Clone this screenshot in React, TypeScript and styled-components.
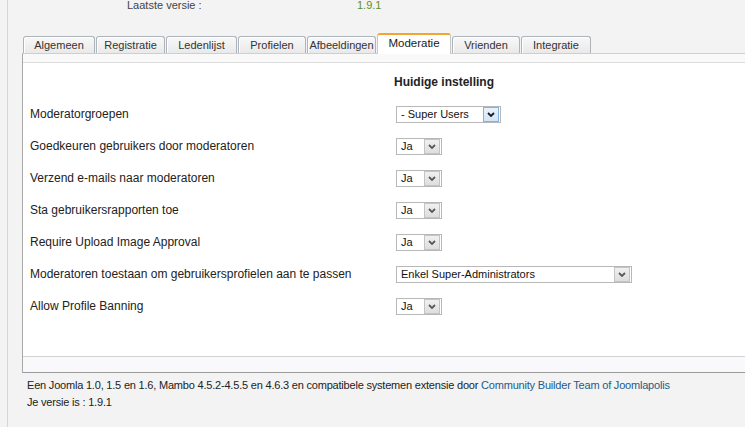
import React from "react";
import styled, { createGlobalStyle } from "styled-components";

const Global = createGlobalStyle`
  html, body { margin: 0; padding: 0; background: #f3f3f3; overflow: hidden; }
  body { font-family: "Liberation Sans", Arial, sans-serif; color: #222; }
`;

const Page = styled.div`
  margin-left: 7px;
  border-left: 1px solid #d6d6d6;
  height: 427px;
  overflow: hidden;
`;

const Header = styled.div`
  display: flex;
  height: 33px;
  font-size: 11px;
  line-height: 10px;
  color: #444;
`;

const HeaderLabel = styled.span`
  margin-left: 119px;
  width: 230px;
`;

const HeaderValue = styled.span`
  color: #5f8f2a;
`;

const TabBar = styled.div`
  display: flex;
  align-items: flex-end;
  height: 20px;
  padding-left: 15px;
  position: relative;
  z-index: 1;
`;

const Tab = styled.div<{ $w: number; $active?: boolean }>`
  box-sizing: border-box;
  width: ${(p) => p.$w}px;
  margin-right: 1px;
  font-size: 11px;
  white-space: nowrap;
  text-align: center;
  color: #333;
  border: 1px solid ${(p) => (p.$active ? "#c9c9c9" : "#aeb4bb")};
  border-bottom: none;
  border-radius: 3px 3px 0 0;
  ${(p) =>
    p.$active
      ? `
    height: 21px;
    margin-bottom: -1px;
    background: #fff;
    border-top: 2px solid #f3a531;
    line-height: 16px;
    font-size: 11.5px;
    color: #1a1a1a;
  `
      : `
    height: 17px;
    line-height: 17px;
    background: linear-gradient(#f8f8f8, #e9e9e9);
    box-shadow: inset 1px 1px 0 #fff;
  `}
`;

const Panel = styled.div`
  margin-left: 14px;
  margin-right: -40px;
  border: 1px solid #a9a9a9;
  border-top-color: #cfcfcf;
  border-bottom-color: #9c9c9c;
  background: #fff;
`;

const PanelTop = styled.div`
  height: 8px;
  background: #f9f9fa;
  border-bottom: 1px solid #dcdcdc;
`;

const PanelBody = styled.div`
  display: grid;
  grid-template-columns: 366px 1fr;
  grid-auto-rows: 32px;
  grid-template-rows: 33px;
  align-items: center;
  padding: 2px 0 34px 7px;
  font-size: 12px;
  color: #222;
`;

const ColHead = styled.div`
  grid-column: 2;
  margin-left: -2px;
  font-weight: bold;
  color: #222;
`;

const Label = styled.div`
  white-space: nowrap;
`;

const PanelBottom = styled.div`
  height: 15px;
  background: #f9f9fb;
  border-top: 1px solid #d2d2d2;
`;

const Footer = styled.div`
  padding: 4px 0 0 19px;
  font-size: 11px;
  letter-spacing: -0.2px;
  line-height: 17px;
  color: #222;
`;

const Link = styled.a`
  color: #1f5a8b;
  text-decoration: none;
`;

const SelectBox = styled.div<{ $w: number }>`
  box-sizing: border-box;
  width: ${(p) => p.$w}px;
  height: 17px;
  border: 1px solid #b8b8b8;
  background: #fff;
  display: flex;
  align-items: center;
  padding: 1px;
  font-size: 11px;
  color: #111;
`;

const SelectText = styled.span`
  flex: 1;
  padding-left: 3px;
  white-space: nowrap;
  overflow: hidden;
`;

const SelectButton = styled.span<{ $focus?: boolean }>`
  box-sizing: border-box;
  width: 16px;
  height: 15px;
  display: flex;
  align-items: center;
  justify-content: center;
  border: 1px solid ${(p) => (p.$focus ? "#7fb2e5" : "#c4c4c4")};
  background: ${(p) =>
    p.$focus ? "linear-gradient(#e8f2fc, #d2e5f8)" : "linear-gradient(#f0f0f0, #dedede)"};
  color: ${(p) => (p.$focus ? "#1b1b1b" : "#5a5a5a")};
`;

const Chevron = () => (
  <svg width="8" height="5" viewBox="0 0 8 5">
    <path d="M1 1 L4 4 L7 1" fill="none" stroke="currentColor" strokeWidth="1.8" />
  </svg>
);

const Select = ({ value, w, focus }: { value: string; w: number; focus?: boolean }) => (
  <SelectBox $w={w}>
    <SelectText>{value}</SelectText>
    <SelectButton $focus={focus}>
      <Chevron />
    </SelectButton>
  </SelectBox>
);

const tabs = [
  { label: "Algemeen", w: 72 },
  { label: "Registratie", w: 69 },
  { label: "Ledenlijst", w: 71 },
  { label: "Profielen", w: 68 },
  { label: "Afbeeldingen", w: 69 },
  { label: "Moderatie", w: 74, active: true },
  { label: "Vrienden", w: 68 },
  { label: "Integratie", w: 70 },
];

const rows = [
  { label: "Moderatorgroepen", value: "- Super Users", w: 105, focus: true },
  { label: "Goedkeuren gebruikers door moderatoren", value: "Ja", w: 46 },
  { label: "Verzend e-mails naar moderatoren", value: "Ja", w: 46 },
  { label: "Sta gebruikersrapporten toe", value: "Ja", w: 46 },
  { label: "Require Upload Image Approval", value: "Ja", w: 46 },
  { label: "Moderatoren toestaan om gebruikersprofielen aan te passen", value: "Enkel Super-Administrators", w: 236 },
  { label: "Allow Profile Banning", value: "Ja", w: 46 },
];

export default function App() {
  return (
    <>
      <Global />
      <Page>
        <Header>
          <HeaderLabel>Laatste versie :</HeaderLabel>
          <HeaderValue>1.9.1</HeaderValue>
        </Header>
        <TabBar>
          {tabs.map((t) => (
            <Tab key={t.label} $w={t.w} $active={t.active}>
              {t.label}
            </Tab>
          ))}
        </TabBar>
        <Panel>
          <PanelTop />
          <PanelBody>
            <ColHead>Huidige instelling</ColHead>
            {rows.map((r) => (
              <React.Fragment key={r.label}>
                <Label>{r.label}</Label>
                <Select value={r.value} w={r.w} focus={r.focus} />
              </React.Fragment>
            ))}
          </PanelBody>
          <PanelBottom />
        </Panel>
        <Footer>
          Een Joomla 1.0, 1.5 en 1.6, Mambo 4.5.2-4.5.5 en 4.6.3 en compatibele systemen extensie door{" "}
          <Link href="#">Community Builder Team of Joomlapolis</Link>
          <br />
          Je versie is : 1.9.1
        </Footer>
      </Page>
    </>
  );
}
